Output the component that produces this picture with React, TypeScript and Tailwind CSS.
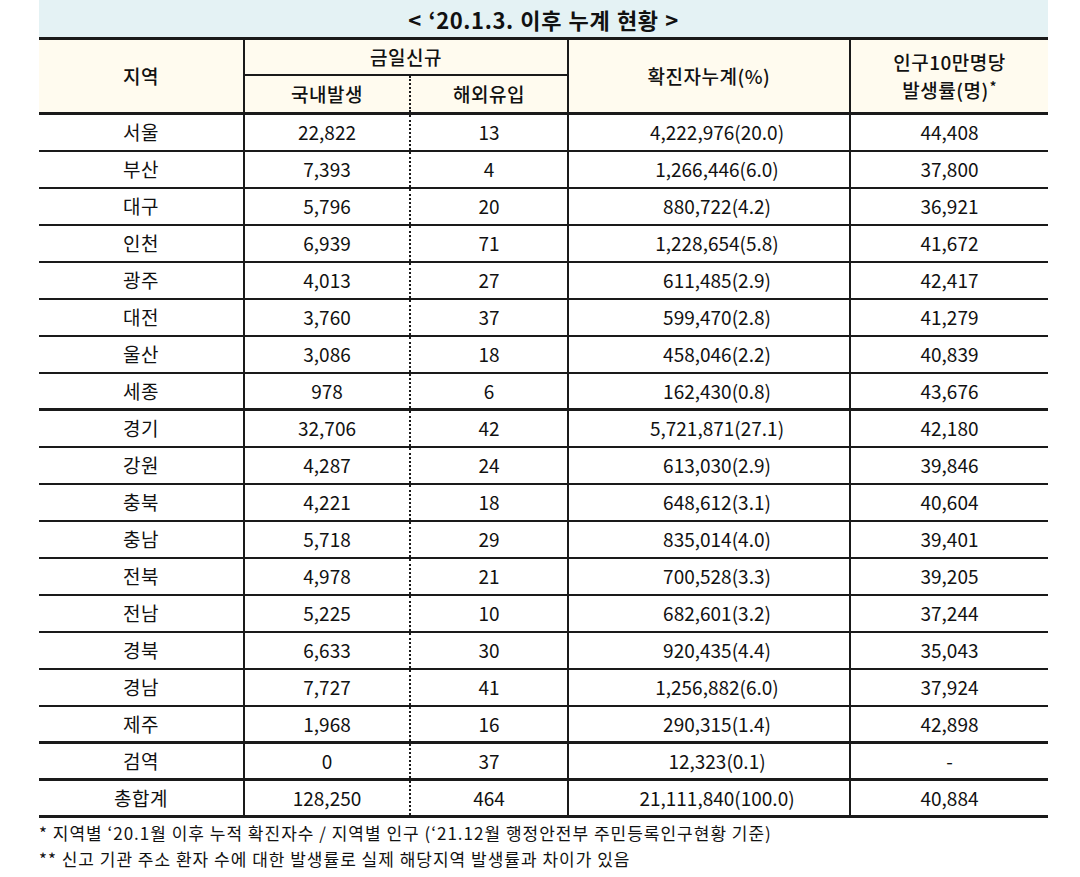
import React from 'react';

type Row = {
  region: string;
  domestic: string;
  overseas: string;
  total: string;
  rate: string;
  thick?: boolean;
};

const rows: Row[] = [
  { region: '서울', domestic: '22,822', overseas: '13', total: '4,222,976(20.0)', rate: '44,408' },
  { region: '부산', domestic: '7,393', overseas: '4', total: '1,266,446(6.0)', rate: '37,800' },
  { region: '대구', domestic: '5,796', overseas: '20', total: '880,722(4.2)', rate: '36,921' },
  { region: '인천', domestic: '6,939', overseas: '71', total: '1,228,654(5.8)', rate: '41,672' },
  { region: '광주', domestic: '4,013', overseas: '27', total: '611,485(2.9)', rate: '42,417' },
  { region: '대전', domestic: '3,760', overseas: '37', total: '599,470(2.8)', rate: '41,279' },
  { region: '울산', domestic: '3,086', overseas: '18', total: '458,046(2.2)', rate: '40,839' },
  { region: '세종', domestic: '978', overseas: '6', total: '162,430(0.8)', rate: '43,676', thick: true },
  { region: '경기', domestic: '32,706', overseas: '42', total: '5,721,871(27.1)', rate: '42,180' },
  { region: '강원', domestic: '4,287', overseas: '24', total: '613,030(2.9)', rate: '39,846' },
  { region: '충북', domestic: '4,221', overseas: '18', total: '648,612(3.1)', rate: '40,604' },
  { region: '충남', domestic: '5,718', overseas: '29', total: '835,014(4.0)', rate: '39,401' },
  { region: '전북', domestic: '4,978', overseas: '21', total: '700,528(3.3)', rate: '39,205' },
  { region: '전남', domestic: '5,225', overseas: '10', total: '682,601(3.2)', rate: '37,244' },
  { region: '경북', domestic: '6,633', overseas: '30', total: '920,435(4.4)', rate: '35,043' },
  { region: '경남', domestic: '7,727', overseas: '41', total: '1,256,882(6.0)', rate: '37,924' },
  { region: '제주', domestic: '1,968', overseas: '16', total: '290,315(1.4)', rate: '42,898', thick: true },
  { region: '검역', domestic: '0', overseas: '37', total: '12,323(0.1)', rate: '-', thick: true },
  { region: '총합계', domestic: '128,250', overseas: '464', total: '21,111,840(100.0)', rate: '40,884', thick: true },
];

const font = { fontFamily: '"Noto Sans CJK KR", "Noto Sans", sans-serif' };

export default function App() {
  return (
    <div className="w-[1080px] h-[877px] bg-white text-[#111]" style={font}>
      <div className="ml-[39px] w-[1009px]">
        {/* title band */}
        <div className="h-[37px] bg-[#e4f2f4] flex items-center justify-center text-[22px] font-bold leading-none tracking-[0.6px] [word-spacing:1px]">
          &lt; ‘20.1.3. 이후 누계 현황 &gt;
        </div>

        {/* header */}
        <div className="grid grid-cols-[204px_166px_158px_282px_199px] grid-rows-[36px_36px] bg-[#fffbef] border-t-[3px] border-b-[3px] border-[#1a1a1a] text-[19px] font-medium tracking-[0.5px]">
          <div className="row-span-2 flex items-center justify-center">지역</div>
          <div className="col-span-2 border-l-2 border-b-2 border-[#1a1a1a] flex items-center justify-center">금일신규</div>
          <div className="row-span-2 border-l-2 border-[#1a1a1a] flex items-center justify-center">확진자누계(%)</div>
          <div className="row-span-2 border-l-2 border-[#1a1a1a] flex flex-col items-center justify-center leading-[28px]">
            <span>인구10만명당</span>
            <span className="flex items-start">
              <span>발생률(명)</span>
              <span className="ml-[1px] mt-[3px] text-[13px] leading-[13px] font-bold">*</span>
            </span>
          </div>
          <div className="border-l-2 border-[#1a1a1a] flex items-center justify-center">국내발생</div>
          <div className="border-l-2 border-dotted border-[#1a1a1a] flex items-center justify-center">해외유입</div>
        </div>

        {/* body */}
        {rows.map((r) => (
          <div
            key={r.region}
            className={`grid grid-cols-[204px_166px_158px_282px_199px] h-[37px] text-[19px] ${
              r.thick ? 'border-b-[3px]' : 'border-b-2'
            } border-[#1a1a1a]`}
          >
            <div className="flex items-center justify-center tracking-[0.5px]">{r.region}</div>
            <div className="border-l-2 border-[#1a1a1a] flex items-center justify-center">{r.domestic}</div>
            <div className="border-l-2 border-dotted border-[#1a1a1a] flex items-center justify-center">{r.overseas}</div>
            <div className="border-l-2 border-[#1a1a1a] flex items-center justify-center pl-[16px]">{r.total}</div>
            <div className="border-l-2 border-[#1a1a1a] flex items-center justify-center">{r.rate}</div>
          </div>
        ))}

        {/* notes */}
        <div className="pt-[2px] text-[17px] leading-[26px] tracking-[1px]">
          <p>* 지역별 ‘20.1월 이후 누적 확진자수 / 지역별 인구 (‘21.12월 행정안전부 주민등록인구현황 기준)</p>
          <p>** 신고 기관 주소 환자 수에 대한 발생률로 실제 해당지역 발생률과 차이가 있음</p>
        </div>
      </div>
    </div>
  );
}
